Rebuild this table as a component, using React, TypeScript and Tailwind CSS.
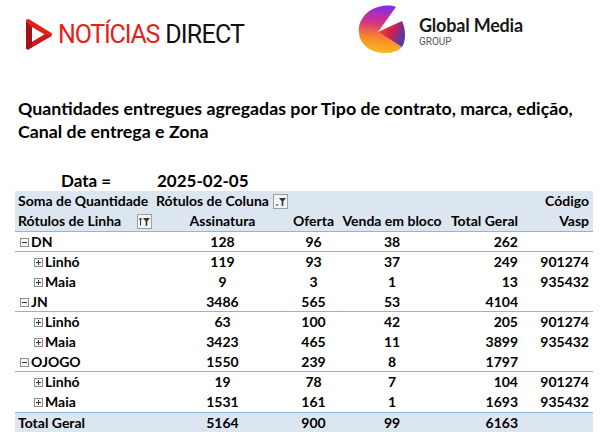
import React from "react";

const cols = "grid grid-cols-[140px_135px_47px_110px_74px_72px]";

function Box({ minus }: { minus?: boolean }) {
  return (
    <svg width="9" height="9" viewBox="0 0 9 9" className="shrink-0">
      <rect x="0.5" y="0.5" width="8" height="8" fill="#f7f7f7" stroke="#8c8c8c" />
      <line x1="2" y1="4.5" x2="7" y2="4.5" stroke="#333" />
      {!minus && <line x1="4.5" y1="2" x2="4.5" y2="7" stroke="#333" />}
    </svg>
  );
}

function FilterBtn({ sort }: { sort?: boolean }) {
  return (
    <svg width="15" height="15" viewBox="0 0 15 15" className="shrink-0">
      <rect x="0.5" y="0.5" width="14" height="14" fill="#f3f3f3" stroke="#a0a0a0" />
      <path d="M6 4 H13 L10.3 7.3 V11.5 L8.7 12.3 V7.3 Z" fill="#333" />
      {sort ? (
        <path d="M3.5 11.5 V4 M2 5.7 L3.5 4 L5 5.7" stroke="#333" strokeWidth="1" fill="none" />
      ) : (
        <path d="M2.5 10.5 H5.5 L4 12 Z" fill="#333" />
      )}
    </svg>
  );
}

type Row = { label: string; level: number; v: string[] };
const rows: Row[] = [
  { label: "DN", level: 0, v: ["128", "96", "38", "262", ""] },
  { label: "Linhó", level: 1, v: ["119", "93", "37", "249", "901274"] },
  { label: "Maia", level: 1, v: ["9", "3", "1", "13", "935432"] },
  { label: "JN", level: 0, v: ["3486", "565", "53", "4104", ""] },
  { label: "Linhó", level: 1, v: ["63", "100", "42", "205", "901274"] },
  { label: "Maia", level: 1, v: ["3423", "465", "11", "3899", "935432"] },
  { label: "OJOGO", level: 0, v: ["1550", "239", "8", "1797", ""] },
  { label: "Linhó", level: 1, v: ["19", "78", "7", "104", "901274"] },
  { label: "Maia", level: 1, v: ["1531", "161", "1", "1693", "935432"] },
];

function GlobalLogo() {
  return (
    <svg width="51" height="49" viewBox="0 0 51 49" className="shrink-0">
      <defs>
        <linearGradient id="gA" x1="0.3" y1="0" x2="0.2" y2="1">
          <stop offset="0" stopColor="#8a2be2" />
          <stop offset="0.35" stopColor="#d63384" />
          <stop offset="0.65" stopColor="#f7842a" />
          <stop offset="1" stopColor="#f9c31f" />
        </linearGradient>
        <linearGradient id="gB" x1="0" y1="0.3" x2="1" y2="0.7">
          <stop offset="0" stopColor="#f04a23" />
          <stop offset="0.45" stopColor="#d61f4f" />
          <stop offset="1" stopColor="#3b3fb0" />
        </linearGradient>
      </defs>
      <path
        d="M38 2 C30 -1 18 1 10 7 C3 13 0 20 1 28 C2 40 13 48 27 48 C34 48 40 46 44 42 L 20 27 L 38 2 Z"
        fill="url(#gA)"
      />
      <path d="M44 16 L20 27 L44 42 C48 36 48 24 44 16 Z" fill="url(#gB)" />
    </svg>
  );
}

function NoticiasIcon() {
  return (
    <svg width="28" height="33" viewBox="0 0 28 33" className="shrink-0">
      <path d="M3 1 C1.5 1 1 2 1 3.5 V29.5 C1 31 2.3 32 3.8 31.2 L26 18.3 C27.3 17.5 27.3 15.5 26 14.7 L4.5 1.5 C4 1.2 3.5 1 3 1 Z" fill="#e2231a" />
      <path d="M7 9 V24 L19.5 16.5 Z" fill="#ffffff" />
      <path d="M1 3.5 V29.5 C1 31 2.3 32 3.8 31.2 L7 29.3 V9 L1 3.5 Z" fill="#a3141a" />
      <path d="M7 24 L19.5 16.5 L26 18.3 L7 29.3 Z" fill="#c81c1f" />
    </svg>
  );
}

export default function App() {
  return (
    <div className="w-[609px] h-[443px] bg-white overflow-hidden text-black font-['Lato',sans-serif]">
      <div className="flex h-[97px] items-start">
        <div className="ml-[25px] mt-[18px] flex items-center w-[218px]">
          <NoticiasIcon />
          <span className="ml-[5px] font-['Roboto',sans-serif] text-[25px] leading-none tracking-[-1.2px] text-[#e2231a] font-normal">
            NOTÍCIAS
          </span>
          <span className="ml-[6px] font-['Roboto',sans-serif] text-[25px] leading-none tracking-[-0.8px] text-[#111] font-normal">
            DIRECT
          </span>
        </div>
        <div className="ml-[115px] mt-[5px] flex items-start">
          <GlobalLogo />
          <div className="ml-[10px] mt-[11px] flex flex-col">
            <span className="text-[18px] leading-[18px] font-bold text-[#1a1a1a] tracking-[-0.2px]">Global Media</span>
            <span className="mt-[3px] text-[10px] leading-[10px] text-[#555] font-['Roboto',sans-serif]">GROUP</span>
          </div>
        </div>
      </div>

      <div className="pl-[18px] text-[17.8px] leading-[23px] font-bold">
        <div>Quantidades entregues agregadas por Tipo de contrato, marca, edição,</div>
        <div>Canal de entrega e Zona</div>
      </div>

      <div className="mt-[28px] flex h-[20px] items-center text-[17px] leading-[20px] font-bold">
        <span className="ml-[61px] w-[96px]">Data =</span>
        <span>2025-02-05</span>
      </div>

      <div className="ml-[15px] w-[578px] text-[14px] leading-[20px] font-bold">
        <div className="bg-[#dce6f1] border-b border-[#95b3d7]">
          <div className={`${cols} h-[20px] items-center`}>
            <div className="pl-[3px] whitespace-nowrap">Soma de Quantidade</div>
            <div className="flex items-center justify-between pr-[2px] pl-[1px] whitespace-nowrap">
              <span>Rótulos de Coluna</span>
              <FilterBtn />
            </div>
            <div />
            <div />
            <div />
            <div className="text-right pr-[4px]">Código</div>
          </div>
          <div className={`${cols} h-[20px] items-center`}>
            <div className="pl-[3px] pr-[3px] flex items-center justify-between whitespace-nowrap">
              <span>Rótulos de Linha</span>
              <FilterBtn sort />
            </div>
            <div className="text-center">Assinatura</div>
            <div className="text-center">Oferta</div>
            <div className="text-center whitespace-nowrap">Venda em bloco</div>
            <div className="text-right pr-[3px] whitespace-nowrap">Total Geral</div>
            <div className="text-right pr-[4px]">Vasp</div>
          </div>
        </div>
        {rows.map((r, i) => (
          <div
            key={i}
            className={`${cols} h-[20px] items-center ${r.level === 0 ? "border-b border-[#95b3d7]" : ""}`}
          >
            <div className={`flex items-center whitespace-nowrap ${r.level === 0 ? "pl-[5px]" : "pl-[19px]"}`}>
              <Box minus={r.level === 0} />
              <span className="ml-[2px]">{r.label}</span>
            </div>
            <div className="text-center">{r.v[0]}</div>
            <div className="text-center">{r.v[1]}</div>
            <div className="text-center">{r.v[2]}</div>
            <div className="text-right pr-[3px]">{r.v[3]}</div>
            <div className="text-right pr-[4px]">{r.v[4]}</div>
          </div>
        ))}
        <div className={`${cols} h-[20px] items-center bg-[#dce6f1] border-t border-[#95b3d7]`}>
          <div className="pl-[3px]">Total Geral</div>
          <div className="text-center">5164</div>
          <div className="text-center">900</div>
          <div className="text-center">99</div>
          <div className="text-right pr-[3px]">6163</div>
          <div />
        </div>
      </div>
    </div>
  );
}
